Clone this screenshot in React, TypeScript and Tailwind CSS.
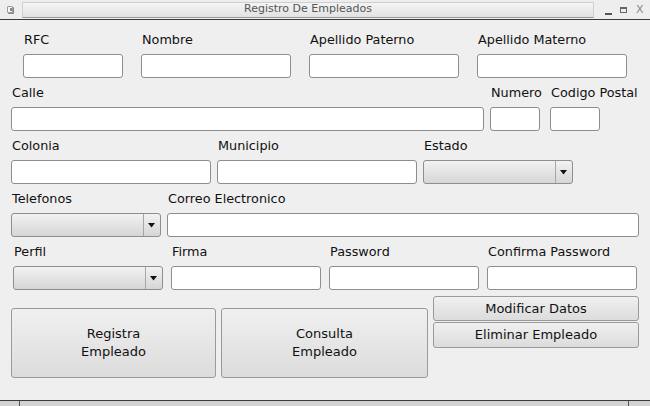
import type { ReactNode } from 'react'

const font = { fontFamily: '"DejaVu Sans", "Liberation Sans", sans-serif' }

function Field({ label, w, gap = 'mt-[8px]', children }: { label: string; w: string; gap?: string; children?: ReactNode }) {
  return (
    <div className={`flex flex-col ${w}`}>
      <div className="pl-[1px] h-[13px] leading-[13px] text-[12.8px] text-[#111] whitespace-nowrap">{label}</div>
      <div className={gap}>{children ?? <TextBox />}</div>
    </div>
  )
}

function TextBox() {
  return <div className="h-[24px] w-full rounded-[3px] border border-[#8e8e8e] bg-white" />
}

function Combo() {
  return (
    <div className="flex h-[24px] w-full rounded-[3px] border border-[#8e8e8e] bg-gradient-to-b from-[#f2f2f2] to-[#d6d6d6]">
      <div className="flex-1" />
      <div className="flex w-[17px] items-center justify-center border-l border-[#a6a6a6]">
        <svg width="8" height="5" viewBox="0 0 8 5">
          <path d="M0 0 H7 L3.5 4.5 Z" fill="#111" />
        </svg>
      </div>
    </div>
  )
}

function Btn({ className, children }: { className: string; children: ReactNode }) {
  return (
    <button className={`flex items-center justify-center rounded-[3px] border border-[#9a9a9a] bg-gradient-to-b from-[#f0f0f0] to-[#dcdcdc] text-[13px] text-[#111] ${className}`}>
      {children}
    </button>
  )
}

export default function App() {
  return (
    <div className="flex h-[406px] w-[650px] flex-col overflow-hidden bg-[#efefef]" style={font}>
      {/* title bar */}
      <div className="flex h-[20px] items-center border-b border-[#3a3a3a] bg-[#eeeeee]">
        <div className="ml-[7px] mr-[9px] flex h-[7px] w-[6px] items-center justify-end rounded-[1px] border border-[#9a9a9a] bg-[#f8f8f8] shadow-[1px_1px_0_#888]">
          <div className="h-[3px] w-[2px] bg-[#888]" />
        </div>
        <div className="flex h-[16px] w-[572px] items-center justify-center border border-[#cfcfcf] border-b-[#999] bg-gradient-to-b from-[#f4f4f4] to-[#e2e2e2] text-[11px] text-[#555]">
          Registro De Empleados
        </div>
        <div className="ml-[11px] mt-[8px] h-[2px] w-[7px] bg-[#555]" />
        <div className="ml-[8px] h-[6px] w-[7px] border border-[#666] border-t-2" />
        <div className="ml-[9px] text-[11px] leading-none text-[#888]">X</div>
      </div>

      {/* form */}
      <div className="flex-1">
        <div className="mt-[13px] flex pl-[23px] gap-[18px]">
          <Field label="RFC" w="w-[100px]" />
          <Field label="Nombre" w="w-[150px]" />
          <Field label="Apellido Paterno" w="w-[150px]" />
          <Field label="Apellido Materno" w="w-[150px]" />
        </div>

        <div className="mt-[8px] flex pl-[11px]">
          <Field label="Calle" w="w-[473px]" />
          <Field label="Numero" w="ml-[6px] w-[50px]" />
          <Field label="Codigo Postal" w="ml-[10px] w-[50px]" />
        </div>

        <div className="mt-[8px] flex pl-[11px] gap-[6px]">
          <Field label="Colonia" w="w-[200px]" />
          <Field label="Municipio" w="w-[200px]" />
          <Field label="Estado" w="w-[150px]">
            <Combo />
          </Field>
        </div>

        <div className="mt-[8px] flex pl-[11px] gap-[6px]">
          <Field label="Telefonos" w="w-[150px]">
            <Combo />
          </Field>
          <Field label="Correo Electronico" w="w-[472px]" />
        </div>

        <div className="mt-[8px] flex pl-[13px] gap-[8px]">
          <Field label="Perfil" w="w-[150px]">
            <Combo />
          </Field>
          <Field label="Firma" w="w-[150px]" />
          <Field label="Password" w="w-[150px]" />
          <Field label="Confirma Password" w="w-[150px]" />
        </div>

        <div className="mt-[6px] flex items-start pl-[11px]">
          <Btn className="mt-[12px] h-[70px] w-[205px] flex-col leading-[18px]">
            <span>Registra</span>
            <span>Empleado</span>
          </Btn>
          <Btn className="ml-[5px] mt-[12px] h-[70px] w-[207px] flex-col leading-[18px]">
            <span>Consulta</span>
            <span>Empleado</span>
          </Btn>
          <div className="ml-[5px] flex w-[206px] flex-col gap-[1px]">
            <Btn className="h-[25px] w-full">Modificar Datos</Btn>
            <Btn className="h-[26px] w-full">Eliminar Empleado</Btn>
          </div>
        </div>
      </div>

      {/* bottom frame */}
      <div className="flex h-[6px] border-t border-[#3a3a3a] bg-[#d2d2d2]">
        <div className="w-[20px] border-r border-[#555]" />
        <div className="w-[609px] border-r border-[#555]" />
      </div>
    </div>
  )
}
